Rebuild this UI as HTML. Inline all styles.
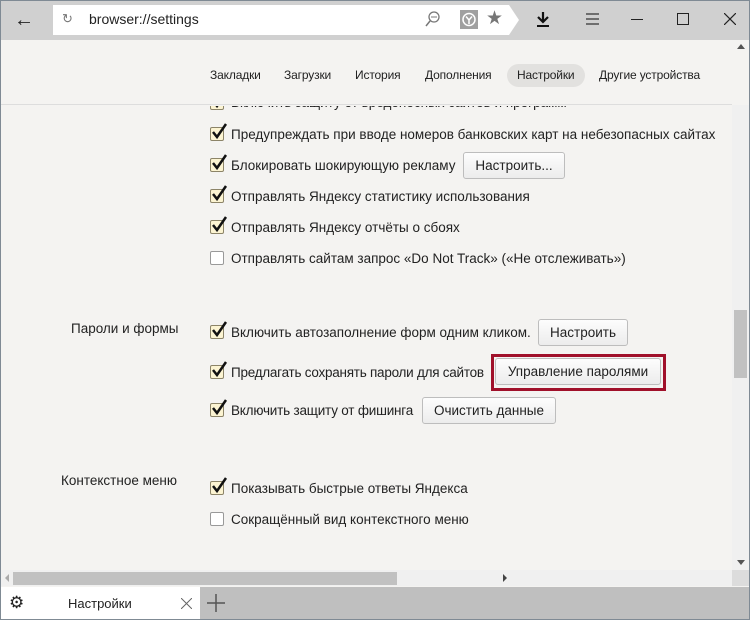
<!DOCTYPE html>
<html><head><meta charset="utf-8"><style>
*{margin:0;padding:0;box-sizing:border-box}
body{width:750px;height:620px;overflow:hidden;background:#f4f3f1;font-family:"Liberation Sans",sans-serif;font-size:13.5px;color:#222;position:relative}
.frame{position:absolute;left:0;top:0;width:750px;height:620px;border:1px solid #7f8a94;pointer-events:none;z-index:9}
.top{position:absolute;left:0;top:0;width:750px;height:40px;background:#d0d0d0}
.addr{position:absolute;left:53px;top:5px;width:456px;height:30px;background:#fff}
.addr:after{content:"";position:absolute;right:-10px;top:0;border-left:10px solid #fff;border-top:15px solid transparent;border-bottom:15px solid transparent}
.t{position:absolute;white-space:nowrap}
.nav{position:absolute;white-space:nowrap;font-size:12px;letter-spacing:-0.15px}
.hdr{position:absolute;left:0;top:40px;width:732px;height:65px;border-bottom:1px solid #ddd}
.pill{position:absolute;left:507px;top:64px;width:78px;height:23px;background:#e2e1df;border-radius:12px}
.cb{position:absolute;width:14px;height:14px;border:1px solid #8c8468;background:#fcf4d2;border-radius:2px}
.cb svg{position:absolute;left:0;top:-6px}
.btn{position:absolute;height:27px;border:1px solid #bdbdbd;border-radius:3px;background:linear-gradient(#fdfdfd,#ececec);text-align:center;line-height:25px;font-size:13.5px}
.vs{position:absolute;left:732px;top:105px;width:17px;height:465px;background:#f0f0f0}
.hs{position:absolute;left:1px;top:570px;width:748px;height:16px;background:#f0f0f0}
.tabs{position:absolute;left:0;top:587px;width:750px;height:33px;background:#bfbfbf}
.tab{position:absolute;left:1px;top:0;width:199px;height:33px;background:#fff}
.clip{position:absolute;left:0;top:106px;width:732px;height:464px;overflow:hidden}
.inner{position:absolute;left:0;top:-106px;width:732px;height:570px}
</style></head><body>
<div class="top"></div>
<div class="t" style="left:14px;top:9px;font-size:20px;font-weight:bold">←</div>
<div class="addr"></div>
<div class="t" style="left:62px;top:11px;font-size:13px;color:#777">↻</div>
<div class="t" style="left:89px;top:11px;font-size:14px;color:#222">browser://settings</div>
<svg class="t" style="left:424px;top:10px" width="18" height="18"><circle cx="10" cy="7" r="5" fill="none" stroke="#777" stroke-width="1.3"/><line x1="7" y1="7" x2="13" y2="7" stroke="#777"/><line x1="6" y1="11" x2="2" y2="16" stroke="#777" stroke-width="1.5"/></svg>
<div class="t" style="left:460px;top:10px;width:18px;height:19px;background:#a0a0a0"><svg width="18" height="19"><circle cx="9" cy="9.5" r="6" fill="none" stroke="#fff" stroke-width="1.5"/><path d="M6 6.5L9 10L12 6.5M9 10V14" stroke="#fff" stroke-width="1.5" fill="none"/></svg></div>
<div class="t" style="left:486px;top:7px;font-size:19px;color:#777">★</div>
<svg class="t" style="left:535px;top:11px" width="16" height="17"><path d="M8 1V11M3 6L8 11L13 6" stroke="#111" stroke-width="2.2" fill="none"/><rect x="2" y="14" width="12" height="2" fill="#111"/></svg>
<svg class="t" style="left:586px;top:13px" width="13" height="12"><path d="M0 1H13M0 6H13M0 11H13" stroke="#333" stroke-width="1.2"/></svg>
<div class="t" style="left:631px;top:19px;width:12px;height:1px;background:#222"></div>
<div class="t" style="left:677px;top:13px;width:12px;height:12px;border:1px solid #222"></div>
<svg class="t" style="left:724px;top:13px" width="12" height="12"><path d="M0 0L12 12M12 0L0 12" stroke="#222" stroke-width="1.2"/></svg>

<div class="hdr"></div>
<div class="pill"></div>
<div class="nav" style="left:210px;top:68px">Закладки</div>
<div class="nav" style="left:284px;top:68px">Загрузки</div>
<div class="nav" style="left:355px;top:68px">История</div>
<div class="nav" style="left:425px;top:68px">Дополнения</div>
<div class="nav" style="left:517px;top:68px">Настройки</div>
<div class="nav" style="left:599px;top:68px">Другие устройства</div>

<div class="clip"><div class="inner">
<div class="cb" style="left:210px;top:96px"><svg width="17" height="19"><path d="M2 10L6 15L15 2" stroke="#111" stroke-width="2.5" fill="none"/></svg></div><div class="t" style="left:231px;top:95px">Включить защиту от вредоносных сайтов и программ</div>
<div class="cb" style="left:210px;top:127px"><svg width="17" height="19"><path d="M2 10L6 15L15 2" stroke="#111" stroke-width="2.5" fill="none"/></svg></div><div class="t" style="left:231px;top:127px">Предупреждать при вводе номеров банковских карт на небезопасных сайтах</div>
<div class="cb" style="left:210px;top:158px"><svg width="17" height="19"><path d="M2 10L6 15L15 2" stroke="#111" stroke-width="2.5" fill="none"/></svg></div><div class="t" style="left:231px;top:158px">Блокировать шокирующую рекламу</div>
<div class="btn" style="left:463px;top:152px;width:102px">Настроить...</div>
<div class="cb" style="left:210px;top:189px"><svg width="17" height="19"><path d="M2 10L6 15L15 2" stroke="#111" stroke-width="2.5" fill="none"/></svg></div><div class="t" style="left:231px;top:189px">Отправлять Яндексу статистику использования</div>
<div class="cb" style="left:210px;top:220px"><svg width="17" height="19"><path d="M2 10L6 15L15 2" stroke="#111" stroke-width="2.5" fill="none"/></svg></div><div class="t" style="left:231px;top:220px">Отправлять Яндексу отчёты о сбоях</div>
<div class="cb" style="left:210px;top:251px;background:#fff;border-color:#999"></div><div class="t" style="left:231px;top:251px">Отправлять сайтам запрос «Do Not Track» («Не отслеживать»)</div>

<div class="t" style="left:71px;top:321px">Пароли и формы</div>
<div class="cb" style="left:210px;top:325px"><svg width="17" height="19"><path d="M2 10L6 15L15 2" stroke="#111" stroke-width="2.5" fill="none"/></svg></div><div class="t" style="left:231px;top:325px">Включить автозаполнение форм одним кликом.</div>
<div class="btn" style="left:538px;top:319px;width:90px">Настроить</div>
<div class="cb" style="left:210px;top:365px"><svg width="17" height="19"><path d="M2 10L6 15L15 2" stroke="#111" stroke-width="2.5" fill="none"/></svg></div><div class="t" style="left:231px;top:365px;letter-spacing:-0.25px">Предлагать сохранять пароли для сайтов</div>
<div style="position:absolute;left:491px;top:354px;width:175px;height:37px;border:3px solid #a0102a"></div>
<div class="btn" style="left:495px;top:358px;width:166px">Управление паролями</div>
<div class="cb" style="left:210px;top:403px"><svg width="17" height="19"><path d="M2 10L6 15L15 2" stroke="#111" stroke-width="2.5" fill="none"/></svg></div><div class="t" style="left:231px;top:403px;letter-spacing:-0.2px">Включить защиту от фишинга</div>
<div class="btn" style="left:422px;top:397px;width:134px">Очистить данные</div>

<div class="t" style="left:61px;top:473px">Контекстное меню</div>
<div class="cb" style="left:210px;top:481px"><svg width="17" height="19"><path d="M2 10L6 15L15 2" stroke="#111" stroke-width="2.5" fill="none"/></svg></div><div class="t" style="left:231px;top:481px">Показывать быстрые ответы Яндекса</div>
<div class="cb" style="left:210px;top:512px;background:#fff;border-color:#999"></div><div class="t" style="left:231px;top:512px">Сокращённый вид контекстного меню</div>
</div></div>

<div class="vs"></div>
<div class="t" style="left:734px;top:310px;width:13px;height:68px;background:#c1c1c1"></div>
<div class="t" style="left:737px;top:44px;border-bottom:5px solid #555;border-left:4px solid transparent;border-right:4px solid transparent"></div>
<div class="t" style="left:737px;top:560px;border-top:5px solid #555;border-left:4px solid transparent;border-right:4px solid transparent"></div>
<div class="hs"></div>
<div class="t" style="left:13px;top:572px;width:384px;height:13px;background:#c1c1c1"></div>
<div class="t" style="left:5px;top:574px;border-right:4px solid #aaa;border-top:4px solid transparent;border-bottom:4px solid transparent"></div>
<div class="t" style="left:503px;top:574px;border-left:4px solid #444;border-top:4px solid transparent;border-bottom:4px solid transparent"></div>
<div class="t" style="left:732px;top:570px;width:17px;height:16px;background:#dcdcdc"></div>

<div class="tabs"><div class="tab"></div></div>
<div class="t" style="left:9px;top:593px;font-size:17px;color:#222">⚙</div>
<div class="t" style="left:68px;top:596px;font-size:13px">Настройки</div>
<svg class="t" style="left:181px;top:598px" width="11" height="11"><path d="M0 0L11 11M11 0L0 11" stroke="#666" stroke-width="1"/></svg>
<svg class="t" style="left:207px;top:594px" width="18" height="18"><path d="M9 0V18M0 9H18" stroke="#555" stroke-width="1.5"/></svg>
<div class="frame"></div>
</body></html>
